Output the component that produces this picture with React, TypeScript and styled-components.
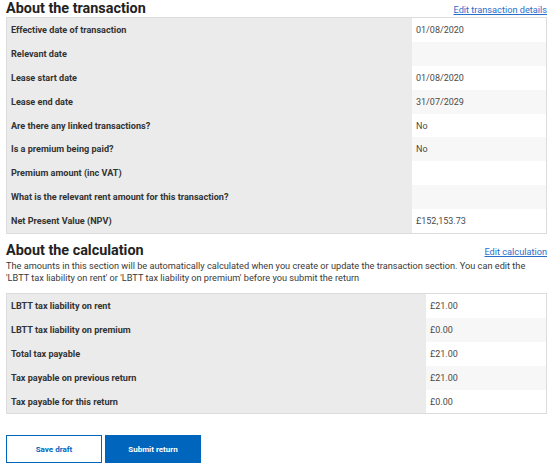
import styled, { createGlobalStyle } from 'styled-components';

interface Row {
  label: string;
  value: string;
}

const transactionRows: Row[] = [
  { label: 'Effective date of transaction', value: '01/08/2020' },
  { label: 'Relevant date', value: '' },
  { label: 'Lease start date', value: '01/08/2020' },
  { label: 'Lease end date', value: '31/07/2029' },
  { label: 'Are there any linked transactions?', value: 'No' },
  { label: 'Is a premium being paid?', value: 'No' },
  { label: 'Premium amount (inc VAT)', value: '' },
  { label: 'What is the relevant rent amount for this transaction?', value: '' },
  { label: 'Net Present Value (NPV)', value: '£152,153.73' },
];

const calculationRows: Row[] = [
  { label: 'LBTT tax liability on rent', value: '£21.00' },
  { label: 'LBTT tax liability on premium', value: '£0.00' },
  { label: 'Total tax payable', value: '£21.00' },
  { label: 'Tax payable on previous return', value: '£21.00' },
  { label: 'Tax payable for this return', value: '£0.00' },
];

const SummaryTable = ({ rows, labelWidth }: { rows: Row[]; labelWidth: number }) => (
  <StTable $labelWidth={labelWidth}>
    {rows.map((row, i) => (
      <StRow key={row.label}>
        <StLabel>{row.label}</StLabel>
        <StValue $striped={i % 2 === 1}>{row.value}</StValue>
      </StRow>
    ))}
  </StTable>
);

const App = () => {
  return (
    <>
      <GlobalStyle />
      <StPage>
        <StSectionHeader>
          <StHeading>About the transaction</StHeading>
          <StLink href="#">Edit transaction details</StLink>
        </StSectionHeader>
        <SummaryTable rows={transactionRows} labelWidth={405} />

        <StSectionHeader $spaced>
          <StHeading>About the calculation</StHeading>
          <StLink href="#">Edit calculation</StLink>
        </StSectionHeader>
        <StHint>
          The amounts in this section will be automatically calculated when you create or update the
          transaction section. You can edit the 'LBTT tax liability on rent' or 'LBTT tax liability
          on premium' before you submit the return
        </StHint>
        <SummaryTable rows={calculationRows} labelWidth={419} />

        <StActions>
          <StButton>Save draft</StButton>
          <StButton $primary>Submit return</StButton>
        </StActions>
      </StPage>
    </>
  );
};

const GlobalStyle = createGlobalStyle`
  body {
    margin: 0;
    background: #ffffff;
    font-family: Roboto, "Liberation Sans", Arial, sans-serif;
    color: #333333;
  }
`;

const StPage = styled.div`
  width: 541px;
  padding: 0 5px 0 6px;
`;

const StSectionHeader = styled.div<{ $spaced?: boolean }>`
  display: flex;
  justify-content: space-between;
  align-items: flex-end;
  height: 17px;
  margin-top: ${({ $spaced }) => ($spaced ? '8px' : '0')};
`;

const StHeading = styled.h2`
  margin: 0;
  font-size: 14.4px;
  line-height: 17px;
  font-weight: 700;
  color: #222222;
`;

const StLink = styled.a`
  font-size: 9.2px;
  line-height: 12px;
  margin-bottom: 1px;
  color: #2a6ecb;
  text-decoration: underline;
`;

const StHint = styled.p`
  margin: 1px 0 9px;
  font-size: 9.2px;
  line-height: 12px;
  color: #3a3a3a;
`;

const StTable = styled.div<{ $labelWidth: number }>`
  display: grid;
  grid-template-columns: ${({ $labelWidth }) => `${$labelWidth}px`} 1fr;
  grid-auto-rows: 23.9px;
  border: 1px solid #dcdcdc;
  background: #ebebeb;
`;

const StRow = styled.div`
  display: contents;
`;

const StLabel = styled.div`
  display: flex;
  align-items: center;
  padding-left: 4px;
  font-size: 9.1px;
  font-weight: 700;
  color: #333333;
`;

const StValue = styled.div<{ $striped: boolean }>`
  display: flex;
  align-items: center;
  padding-left: 4px;
  font-size: 9px;
  color: #4a4a4a;
  background: ${({ $striped }) => ($striped ? '#f7f7f7' : '#ffffff')};
`;

const StActions = styled.div`
  display: flex;
  gap: 3px;
  margin-top: 21px;
`;

const StButton = styled.button<{ $primary?: boolean }>`
  width: 96px;
  height: 28px;
  border: 1px solid #0065bd;
  border-radius: 0;
  background: ${({ $primary }) => ($primary ? '#0065bd' : '#ffffff')};
  color: ${({ $primary }) => ($primary ? '#ffffff' : '#0065bd')};
  font-family: Roboto, "Liberation Sans", Arial, sans-serif;
  font-size: 8px;
  font-weight: 700;
  cursor: pointer;
`;

export default App;
